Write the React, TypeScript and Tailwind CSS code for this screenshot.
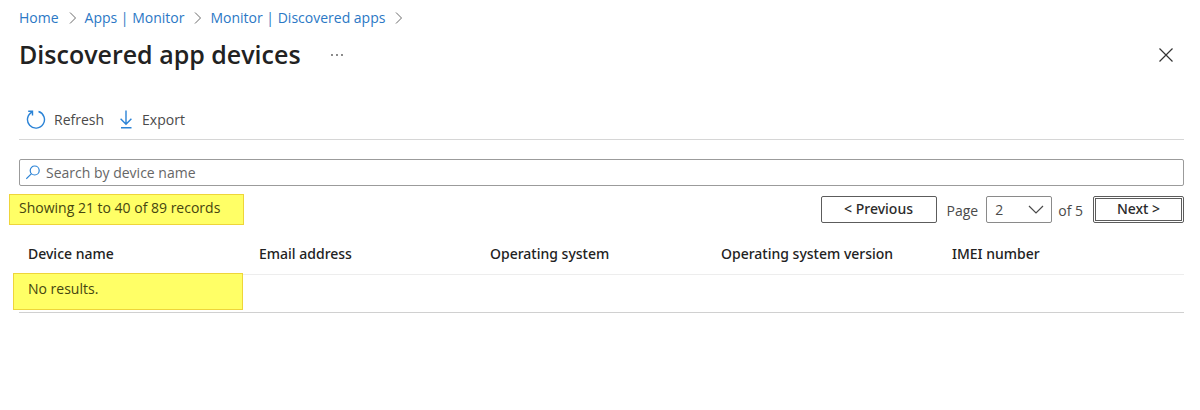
import { ReactNode } from 'react';

const crumbs = ['Home', 'Apps | Monitor', 'Monitor | Discovered apps'];

const columns = [
  'Device name',
  'Email address',
  'Operating system',
  'Operating system version',
  'IMEI number',
];

type CommandButtonProps = {
  icon: ReactNode;
  children: ReactNode;
};

function CommandButton({ icon, children }: CommandButtonProps) {
  return (
    <button type="button" className="flex items-center gap-2 text-[#4a4a4a]">
      {icon}
      {children}
    </button>
  );
}

function CrumbChevron() {
  return (
    <svg width="8" height="14" viewBox="0 0 8 14" fill="none" stroke="#6b6b6b" aria-hidden="true">
      <path d="M1 1.5 6.5 7 1 12.5" />
    </svg>
  );
}

function RefreshIcon() {
  return (
    <svg width="20" height="20" viewBox="0 0 20 20" fill="none" stroke="#2b83d6" strokeWidth="1.4" aria-hidden="true">
      <path d="M12.5 1.5A8.5 8.5 0 1 1 6.2 2" />
      <path d="M2.2 1.2h4.3v4.3" />
    </svg>
  );
}

function DownloadIcon() {
  return (
    <svg width="16" height="20" viewBox="0 0 16 20" fill="none" stroke="#2b83d6" strokeWidth="1.4" aria-hidden="true">
      <path d="M8 .5v13.7M2.6 8.8 8 14.2l5.4-5.4M3 17.8h10.5" />
    </svg>
  );
}

function SearchIcon() {
  return (
    <svg width="15" height="15" viewBox="0 0 15 15" fill="none" stroke="#2b83d6" strokeWidth="1.2" aria-hidden="true">
      <circle cx="8.7" cy="5.5" r="4.5" />
      <path d="M5.5 8.7.3 13.9" />
    </svg>
  );
}

function Pagination() {
  return (
    <nav aria-label="Pagination" className="flex items-center text-[14px] text-[#4a4a4a]">
      <button
        type="button"
        className="h-[27px] w-[116px] rounded-[2px] border border-[#5c5c5c] pb-px font-['Segoe_UI','Noto_Sans',sans-serif] leading-none font-medium text-[#2b2b2b]"
      >
        &lt; Previous
      </button>
      <label htmlFor="page" className="ml-[10px] pt-[2px]">
        Page
      </label>
      <div className="relative ml-2">
        <select
          id="page"
          defaultValue="2"
          className="block h-[27px] w-[66px] appearance-none rounded-[2px] border border-[#8a8a8a] bg-white pl-2"
        >
          <option>1</option>
          <option>2</option>
          <option>3</option>
          <option>4</option>
          <option>5</option>
        </select>
        <svg
          width="16"
          height="10"
          viewBox="0 0 16 10"
          fill="none"
          stroke="#4a4a4a"
          strokeWidth="1.2"
          className="pointer-events-none absolute top-[9px] right-2"
          aria-hidden="true"
        >
          <path d="m1 1 7 7 7-7" />
        </svg>
      </div>
      <span className="ml-[6px] pt-[2px]">of 5</span>
      <button
        type="button"
        className="ml-[10px] h-[27px] w-[91px] rounded-[2px] border-[3px] border-double border-[#5c5c5c] pb-px font-['Segoe_UI','Noto_Sans',sans-serif] leading-none font-medium text-[#2b2b2b]"
      >
        Next &gt;
      </button>
    </nav>
  );
}

function DeviceTable() {
  return (
    <table className="mt-[9px] w-full table-fixed border-b border-[#d0d0d0] text-left text-[14px]">
      <thead>
        <tr className="h-[40px] border-b border-[#ededed]">
          {columns.map((column) => (
            <th
              key={column}
              scope="col"
              className="w-[231px] pl-[9px] font-['Segoe_UI','Noto_Sans',sans-serif] font-medium text-[#222] last:w-auto"
            >
              {column}
            </th>
          ))}
        </tr>
      </thead>
      <tbody>
        <tr className="h-[38px]">
          <td colSpan={columns.length} className="relative pb-[8px] pl-[9px] text-[#454510]">
            <span className="absolute top-[-2px] left-[-6px] h-[37px] w-[230px] border border-[#eed53a] bg-[#ffff66]" />
            <span className="relative">No results.</span>
          </td>
        </tr>
      </tbody>
    </table>
  );
}

export default function App() {
  return (
    <main className="bg-white pr-4 pl-[19px] font-['Segoe_UI','Open_Sans','Noto_Sans',sans-serif] text-[14px] leading-5 text-[#2b2b2b]">
      <nav aria-label="Breadcrumb" className="pt-2">
        <ol className="flex items-center">
          {crumbs.map((crumb) => (
            <li key={crumb} className="mr-[8px] flex items-center gap-[10px]">
              <a href="#" className="text-[#2b78c5]">
                {crumb}
              </a>
              <CrumbChevron />
            </li>
          ))}
        </ol>
      </nav>

      <header className="flex h-[54px] items-center">
        <h1 className="pb-[2px] text-[25px] leading-8 font-semibold text-[#222]">Discovered app devices</h1>
        <button type="button" aria-label="More options" className="ml-7">
          <svg width="16" height="4" viewBox="0 0 16 4" fill="#555" aria-hidden="true">
            <circle cx="3" cy="2" r="0.9" />
            <circle cx="8" cy="2" r="0.9" />
            <circle cx="13" cy="2" r="0.9" />
          </svg>
        </button>
        <button type="button" aria-label="Close" className="mr-[10px] ml-auto">
          <svg width="16" height="16" viewBox="0 0 16 16" fill="none" stroke="#333" strokeWidth="1.2" aria-hidden="true">
            <path d="m1.5 1.5 13 13M14.5 1.5l-13 13" />
          </svg>
        </button>
      </header>

      <div className="mt-[18px] flex h-10 items-center gap-[14px] border-b border-[#d6d6d6] pl-[7px]">
        <CommandButton icon={<RefreshIcon />}>Refresh</CommandButton>
        <CommandButton icon={<DownloadIcon />}>Export</CommandButton>
      </div>

      <label
        htmlFor="search"
        className="mt-[19px] flex h-[27px] items-center gap-[5px] rounded-[2px] border border-[#9b9b9b] px-[6px]"
      >
        <SearchIcon />
        <input
          id="search"
          type="text"
          placeholder="Search by device name"
          className="min-w-0 flex-1 outline-none placeholder:text-[#666]"
        />
      </label>

      <div className="mt-2 flex items-center justify-between">
        <p className="-ml-[10px] h-[31px] w-[235px] border border-[#eed53a] bg-[#ffff66] pt-[3px] pl-[9px] text-[#454510]">
          Showing 21 to 40 of 89 records
        </p>
        <Pagination />
      </div>

      <DeviceTable />
    </main>
  );
}
